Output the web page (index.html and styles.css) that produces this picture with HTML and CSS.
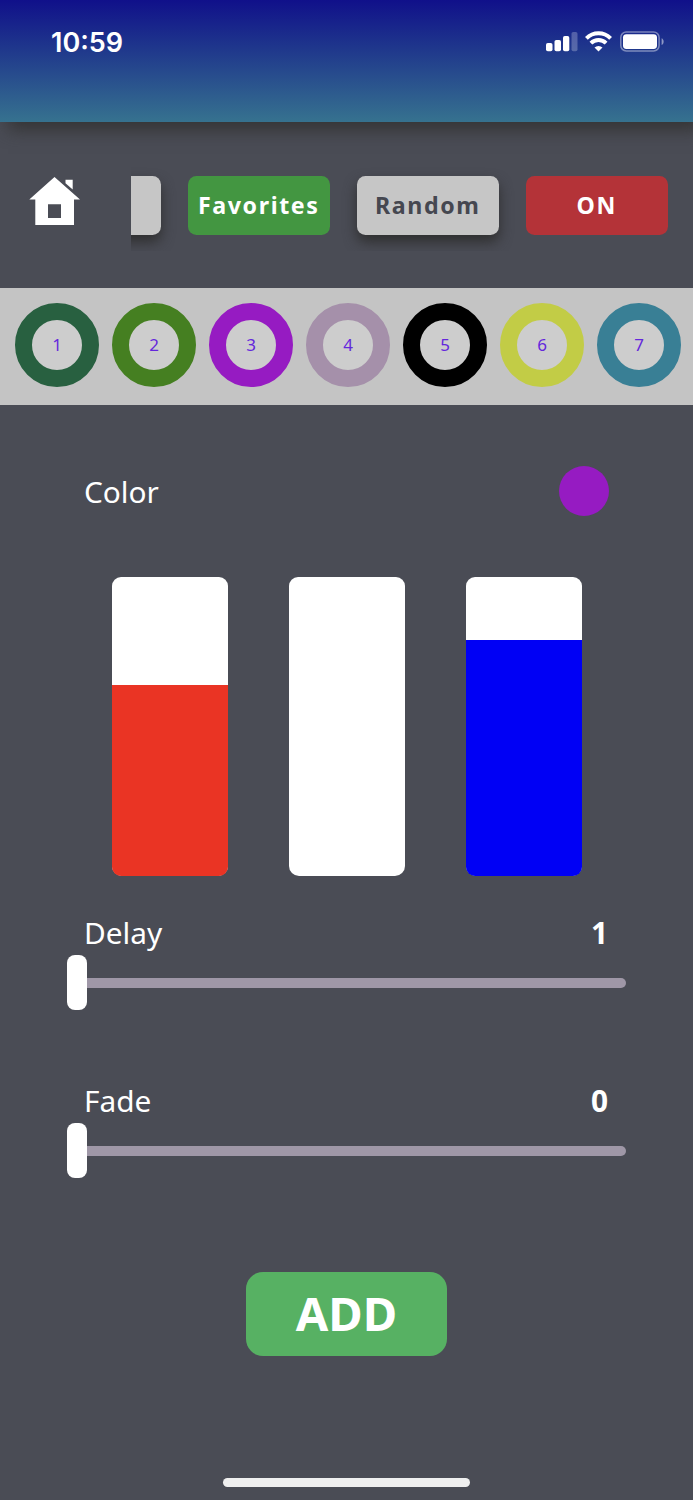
FILE: index.html
```html
<!DOCTYPE html>
<html lang="en">
<head>
    <meta charset="UTF-8">
    <meta name="viewport" content="width=device-width, initial-scale=1.0">
    <title>LED Controller</title>

    <link rel="stylesheet" href="styles.css">
</head>
<body>

    <header class="status-bar">
        <div class="time">10:59</div>
        <svg class="status-icons" width="120" height="24" viewBox="0 0 120 24" fill="#fff">
            <!-- Signal -->
            <rect x="1" y="13" width="6.5" height="8.3" rx="1.8"/>
            <rect x="9.5" y="10" width="6.5" height="11.3" rx="1.8"/>
            <rect x="18" y="6" width="6.3" height="15.3" rx="1.8"/>
            <rect x="26.5" y="2" width="6" height="19.3" rx="1.8" opacity="0.25"/>
            <!-- Wifi -->
            <g fill="none" stroke="#fff" stroke-width="3.9">
                <path d="M41.4 8.3a17 17 0 0 1 24.2 0"/>
                <path d="M45.9 13.1a10.8 10.8 0 0 1 15.2 0"/>
            </g>
            <path d="M53.5 21.6l-4-4.1a5.8 5.8 0 0 1 8 0z"/>
            <!-- Battery -->
            <rect x="75.8" y="2" width="38.3" height="19" rx="5.5" fill="none" stroke="#fff" stroke-width="1.5" opacity="0.42"/>
            <rect x="78" y="4.2" width="34" height="14.7" rx="3.4"/>
            <path d="M116.6 8.2c2.7 1.2 2.7 5.6 0 6.8z" opacity="0.5"/>
        </svg>
    </header>

    <nav>
        <a class="home" href="#">
            <svg width="52" height="50" viewBox="0 0 52 50" fill="#fff">
                <path fill-rule="evenodd" d="M25.5 0L51 22.5h-6V48H6.3V22.5H.3zM19 27.3v13.6h13V27.3z"/>
                <path d="M36.5 2.7h7.2v9.9l-7.2-6.3z"/>
            </svg>
        </a>
        <div class="modes">
            <button class="mode"></button>
            <button class="mode favorites">Favorites</button>
            <button class="mode">Random</button>
            <button class="mode power">ON</button>
        </div>
    </nav>

    <div class="colors">
        <div class="ring ring-1">1</div>
        <div class="ring ring-2">2</div>
        <div class="ring ring-3">3</div>
        <div class="ring ring-4">4</div>
        <div class="ring ring-5">5</div>
        <div class="ring ring-6">6</div>
        <div class="ring ring-7">7</div>
    </div>

    <main>
        <div class="row color-row">
            <span>Color</span>
            <div class="preview"></div>
        </div>

        <!-- RGB levels -->
        <div class="levels">
            <div class="level"><div class="fill red" style="height: 64%"></div></div>
            <div class="level"><div class="fill green" style="height: 0%"></div></div>
            <div class="level"><div class="fill blue" style="height: 79%"></div></div>
        </div>

        <div class="setting">
            <div class="row">
                <span>Delay</span>
                <b>1</b>
            </div>
            <div class="slider"><div class="thumb"></div><div class="track"></div></div>
        </div>

        <div class="setting">
            <div class="row">
                <span>Fade</span>
                <b>0</b>
            </div>
            <div class="slider"><div class="thumb"></div><div class="track"></div></div>
        </div>

        <button class="add">ADD</button>
    </main>

    <div class="home-indicator"></div>

</body>
</html>
```
FILE: styles.css
```css
* {
    margin: 0;
    padding: 0;
    box-sizing: border-box;
    font-family: "Noto Sans", sans-serif;
}

body {
    height: 1500px;
    display: flex;
    flex-direction: column;
    background-color: #4a4c55;
    color: white;
    overflow: hidden;
}

/* Status bar */
.status-bar {
    position: relative;
    flex: none;
    height: 122px;
    display: flex;
    justify-content: space-between;
    align-items: flex-start;
    padding: 25px 28px 0 51px;
    background: linear-gradient(to bottom, #10108a, #36728f);
    box-shadow: 8px 8px 16px rgba(50, 50, 50, 0.9);
}

.time {
    padding-top: 1px;
    font-family: Inter, sans-serif;
    font-size: 27px;
    font-weight: 600;
    line-height: 34px;
}

.status-icons {
    margin-top: 5px;
}

/* Navigation */
nav {
    flex: none;
    height: 166px;
    display: flex;
    align-items: flex-start;
    padding-left: 29px;
}

.home {
    width: 101.5px;
    padding-top: 55px;
}

.home svg {
    display: block;
}

.modes {
    flex: 1;
    min-width: 0;
    height: 89px;
    margin-top: 40px;
    display: flex;
    justify-content: flex-end;
    gap: 26.5px;
    padding: 14px 25px 0 0;
    overflow: hidden;
}

.mode {
    flex: none;
    width: 142.5px;
    height: 59px;
    padding-bottom: 2px;
    border: none;
    border-radius: 8.5px;
    background-color: #c6c6c6;
    color: #454750;
    font-size: 23.2px;
    font-weight: bold;
    letter-spacing: 1.6px;
    box-shadow: 0 7px 13px rgba(45, 45, 45, 0.95);
}

.favorites {
    background-color: #439641;
    color: white;
    box-shadow: none;
}

.power {
    background-color: #b43338;
    color: white;
    box-shadow: none;
}

/* Color strip */
.colors {
    flex: none;
    height: 117px;
    display: flex;
    gap: 13px;
    padding: 15px 0 0 15px;
    background-color: #c4c4c4;
}

.ring {
    flex: none;
    width: 84px;
    height: 84px;
    border: 17px solid;
    border-radius: 50%;
    background-color: #cdcdcd;
    color: #6427dc;
    font-size: 17px;
    line-height: 50px;
    text-align: center;
}

.ring-1 { border-color: #286040; }
.ring-2 { border-color: #457f21; }
.ring-3 { border-color: #961bc2; }
.ring-4 { border-color: #a590aa; }
.ring-5 { border-color: #000000; }
.ring-6 { border-color: #c2cc46; }
.ring-7 { border-color: #397f95; }

/* Settings */
main {
    flex: 1;
    display: flex;
    flex-direction: column;
    padding: 60px 67px 0;
}

.row {
    display: flex;
    justify-content: space-between;
    align-items: center;
    padding: 0 18px 0 17px;
    font-size: 29.8px;
    line-height: 42px;
}

.color-row {
    height: 51px;
    padding-right: 17px;
}

.color-row span {
    padding-top: 2px;
}

.preview {
    width: 50px;
    height: 50px;
    border-radius: 50%;
    background-color: #961bc2;
}

.levels {
    display: flex;
    justify-content: space-between;
    padding: 0 44.5px 0 45px;
    margin: 61px 0 36px;
}

.level {
    width: 115.5px;
    height: 299px;
    display: flex;
    align-items: flex-end;
    border-radius: 9px 9px 10px 10px;
    background-color: white;
}

.fill {
    width: 100%;
    border-radius: 0 0 9px 9px;
}

.red { background-color: #ea3424; }
.green { background-color: #00ff00; }
.blue { background-color: #0000f5; }

.setting {
    height: 168px;
}

.slider {
    display: flex;
    align-items: center;
    margin-top: 1px;
}

.thumb {
    width: 20px;
    height: 55px;
    border-radius: 8px;
    background-color: white;
}

.track {
    flex: 1;
    height: 10px;
    border-radius: 0 5px 5px 0;
    background-color: #9f97a7;
}

.add {
    align-self: center;
    width: 201px;
    height: 84px;
    margin-top: 24px;
    padding-bottom: 3px;
    border: none;
    border-radius: 17px;
    background-color: #57b163;
    color: white;
    font-size: 47px;
    font-weight: bold;
}

.home-indicator {
    flex: none;
    align-self: center;
    width: 247px;
    height: 8.5px;
    margin-bottom: 13.5px;
    border-radius: 5px;
    background-color: #efefef;
}
```
